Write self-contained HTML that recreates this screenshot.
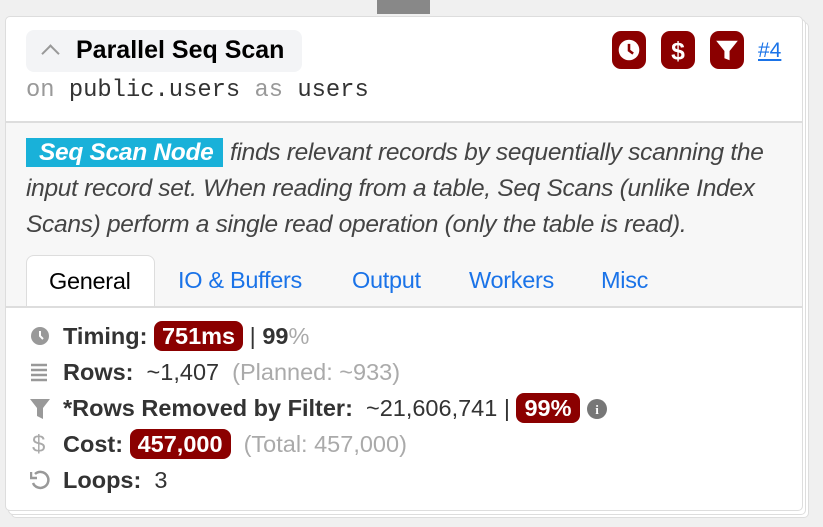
<!DOCTYPE html>
<html><head><style>
body{margin:0;width:823px;height:527px;background:#f0f0f0;font-family:"Liberation Sans",sans-serif;position:relative;overflow:hidden}
.bar{position:absolute;left:377px;top:0;width:53px;height:14px;background:#888}
.sh{position:absolute;background:#fff;border:1px solid #ddd;border-radius:5px}
.card{position:absolute;left:5px;top:16px;width:796px;height:493px;background:#fff;border:1px solid #ddd;border-radius:5px;overflow:hidden}
.title{position:absolute;left:20px;top:13px;height:42px;width:276px;background:#f3f4f6;border-radius:8px}
.title b{position:absolute;left:50px;top:6px;font-size:25px;color:#000;letter-spacing:0}
.chev{position:absolute;left:18px;top:17px;width:11px;height:11px;border-left:2.5px solid #999;border-top:2.5px solid #999;transform:rotate(45deg)}
.mono{position:absolute;left:20px;top:60px;font-family:"Liberation Mono",monospace;font-size:23.8px;color:#333}
.mono i{font-style:normal;color:#999}
.ib{position:absolute;top:14px;width:34px;height:38px;background:#8b0000;border-radius:9px}
.link{position:absolute;left:752px;top:22px;color:#1a73e8;text-decoration:underline;font-size:21px}
.desc{position:absolute;left:0;top:104px;width:796px;height:183px;background:#f7f7f7;border-top:2px solid #ddd;border-bottom:2px solid #ddd}
.desc p{margin:0;position:absolute;left:20px;top:12px;width:770px;font-style:italic;font-size:24.5px;line-height:36px;color:#444;letter-spacing:-0.3px}
.tag{background:#19b1d9;color:#fff;font-weight:bold;padding:1px 10px 1px 13px}
.tabs{position:absolute;left:20px;top:238px;font-size:23.5px;letter-spacing:-0.3px}
.tab{position:absolute;white-space:nowrap;color:#1a73e8}
.gen{position:absolute;left:0;top:0;width:127px;height:50px;background:#fff;border:1px solid #ddd;border-bottom:none;border-radius:8px 8px 0 0;color:#000}
.stats{position:absolute;left:24px;top:302px;font-size:23.5px;color:#333;letter-spacing:0}
.row{position:absolute;left:0;white-space:nowrap;height:30px}
.row b{color:#333}
.ic{position:absolute;left:0;top:4px}
.txt{position:absolute;left:33px;top:1px}
.badge{background:#8b0000;color:#fff;font-weight:bold;border-radius:8px;padding:2px 8px}
.g{color:#aaa}
</style></head><body>
<div class="bar"></div>
<div class="sh" style="left:11px;top:22px;width:796px;height:494px"></div>
<div class="sh" style="left:8px;top:19px;width:796px;height:494px"></div>
<div class="card">
 <div class="title"><span class="chev"></span><b>Parallel Seq Scan</b></div>
 <div class="mono"><i>on</i> public.users <i>as</i> users</div>
 <div class="ib" style="left:606px"><svg width="34" height="38" viewBox="0 0 33 36"><circle cx="16.5" cy="18" r="10" fill="#fff"/><path d="M16.5 12v6.5l4 3" stroke="#8b0000" stroke-width="2.5" fill="none"/></svg></div>
 <div class="ib" style="left:655px"><svg width="34" height="38" viewBox="0 0 33 36"><text x="16.5" y="27" text-anchor="middle" font-size="24" font-weight="bold" fill="#fff" font-family="Liberation Sans">$</text></svg></div>
 <div class="ib" style="left:704px"><svg width="34" height="38" viewBox="0 0 33 36"><path d="M6 9h21l-8 10v9l-5-2v-7z" fill="#fff"/></svg></div>
 <div class="link">#4</div>
 <div class="desc"><p><span class="tag">Seq Scan Node</span> finds relevant records by sequentially scanning the input record set. When reading from a table, Seq Scans (unlike Index Scans) perform a single read operation (only the table is read).</p></div>
 <div class="tabs">
  <div class="gen"><span style="position:absolute;left:22px;top:12px">General</span></div>
  <span class="tab" style="left:152px;top:12px">IO &amp; Buffers</span>
  <span class="tab" style="left:326px;top:12px">Output</span>
  <span class="tab" style="left:443px;top:12px">Workers</span>
  <span class="tab" style="left:575px;top:12px">Misc</span>
 </div>
 <div class="stats">
  <div class="row" style="top:3px"><svg class="ic" width="20" height="20"><circle cx="10" cy="10" r="9" fill="#999"/><path d="M10 5v5l3 3" stroke="#fff" stroke-width="2" fill="none"/></svg><span class="txt"><b>Timing:</b> <span class="badge">751ms</span> | <b>99</b><span class="g">%</span></span></div>
  <div class="row" style="top:39px"><svg class="ic" width="20" height="20"><path d="M1 3h16M1 8h16M1 13h16M1 18h16" stroke="#999" stroke-width="2.5"/></svg><span class="txt"><b>Rows:</b>&nbsp; ~1,407 &nbsp;<span class="g">(Planned: ~933)</span></span></div>
  <div class="row" style="top:75px"><svg class="ic" width="20" height="22"><path d="M0 1h20l-7 9v11l-6-3v-8z" fill="#999"/></svg><span class="txt"><b>*Rows Removed by Filter:</b>&nbsp; ~21,606,741 | <span class="badge">99%</span> <svg width="22" height="20" style="vertical-align:-3px"><circle cx="11" cy="10" r="10" fill="#777"/><text x="11" y="15" text-anchor="middle" font-size="13" font-weight="bold" fill="#fff" font-family="Liberation Serif">i</text></svg></span></div>
  <div class="row" style="top:111px"><span class="ic g" style="top:1px;font-size:24px;left:2px">$</span><span class="txt"><b>Cost:</b> <span class="badge">457,000</span> &nbsp;<span class="g">(Total: 457,000)</span></span></div>
  <div class="row" style="top:147px"><svg class="ic" width="20" height="22"><path d="M5 4a8 8 0 1 1 -2 9" stroke="#999" stroke-width="2.5" fill="none"/><path d="M1 2v6h6" stroke="#999" stroke-width="2.5" fill="none"/></svg><span class="txt"><b>Loops:</b>&nbsp; 3</span></div>
 </div>
</div>
</body></html>
